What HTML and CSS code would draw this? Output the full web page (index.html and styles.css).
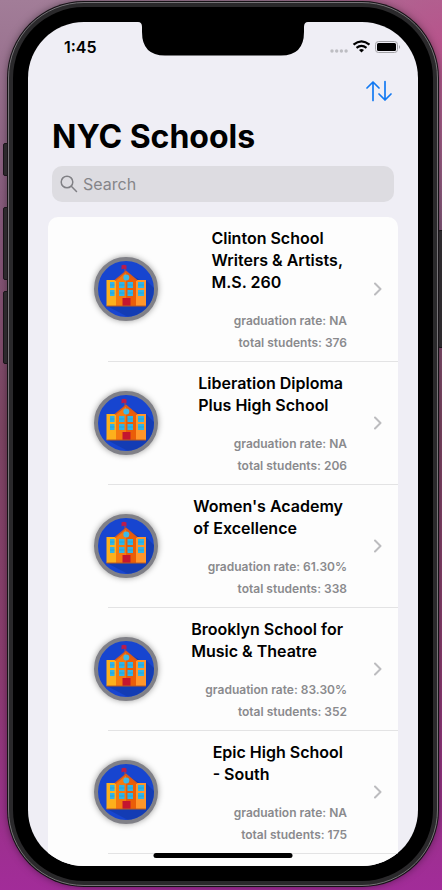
FILE: index.html
```html
<!DOCTYPE html>
<html lang="en">
<head>
<meta charset="utf-8">
<meta name="viewport" content="width=device-width, initial-scale=1">
<title>NYC Schools</title>
<link rel="stylesheet" href="styles.css">
</head>
<body>
<svg class="defs" aria-hidden="true">
  <symbol id="school" viewBox="0 0 56 56">
    <path d="M28 11 44 20 48 19 56 27V40L44 56H30L9 45z" fill="#1239a8" opacity=".7"/>
    <path d="M27 5v7" stroke="#b44a3a" stroke-width="1"/>
    <path d="M23.500 4.500q2.500-1.500 5 0v4q-2.500-1.500-5 0z" fill="#b91d4c"/>
    <path d="M8.500 19H19v26H8.500z" fill="#fdb01c"/>
    <path d="M37 19h11v26H37z" fill="#ff962b"/>
    <path d="M18 19 28 10.500 38 19v26H18z" fill="#f47a10"/>
    <path d="M28 10.500 38 19v26H28z" fill="#ea5d08"/>
    <path d="M17 19.500 28 10.500 39 19.500" fill="none" stroke="#d9581c" stroke-width="1.500"/>
    <circle cx="28.300" cy="16.500" r="3" fill="#3db9e8"/>
    <path d="M12 21h4.500v6H12zM12 29h4.500v6H12zM21 21h5.500v6H21zM21 29h5.500v6H21zM29.500 21h5.500v6h-5.500zM29.500 29h5.500v6h-5.500zM40 21h6v6h-6zM40 29h6v6h-6z" fill="#2fb4e8"/>
    <path d="M12 24h4.500M12 32h4.500M21 24h5.500M29.500 24H35M21 32h5.500M29.500 32H35M40 24h6M40 32h6" stroke="#1f9bd0" stroke-width=".6"/>
    <path d="M24.500 37h8v8h-8z" fill="#c4162f"/>
    <path d="M8.500 45H48" stroke="#bd5a1c" stroke-width="1"/>
  </symbol>
  <symbol id="chevron" viewBox="0 0 8 14"><path d="M1 1.500 6.500 7 1 12.500" fill="none" stroke="#bcbcbf" stroke-width="2" stroke-linecap="round" stroke-linejoin="round"/></symbol>
</svg>
<div class="phone">
  <span class="key key-mute"></span>
  <span class="key key-up"></span>
  <span class="key key-down"></span>
  <span class="key key-power"></span>
  <div class="bezel">
    <div class="screen">
      <svg class="notch" viewBox="0 0 170 34" aria-hidden="true"><path d="M0 0H170Q166 0 166 5V10Q166 33.500 143 33.500H27Q4 33.500 4 10V5Q4 0 0 0z"/></svg>
      <div class="status">
        <time class="clock">1:45</time>
        <svg class="signals" viewBox="0 0 72 14" aria-hidden="true">
          <g fill="#bdbdc2"><circle cx="4" cy="11" r="1.700"/><circle cx="8.700" cy="11" r="1.700"/><circle cx="13.400" cy="11" r="1.700"/><circle cx="18.100" cy="11" r="1.700"/></g>
          <g fill="none" stroke="#000" stroke-width="2.200"><path d="M25.500 4.700q8-6.600 16 0M28.500 7.900q5-4 10 0"/></g>
          <path d="M33.500 12.500 31 10q2.500-2 5 0z"/>
          <rect x="47.500" y="1.500" width="22" height="11" rx="3" fill="none" stroke="#a2a2a6"/>
          <rect x="49" y="3" width="19" height="8" rx="1.500"/>
          <path d="M71 5q2 2 0 4z" fill="#a2a2a6"/>
        </svg>
      </div>
      <header class="header">
        <button class="sort" type="button" aria-label="Sort">
          <svg viewBox="0 0 26 22" aria-hidden="true"><path d="M7 20.500V2M1 8 7 2l6 6M19 1.500V20M13 14l6 6 6-6" fill="none" stroke="#1279f2" stroke-width="1.700" stroke-linecap="round" stroke-linejoin="round"/></svg>
        </button>
        <h1 class="title">NYC Schools</h1>
        <label class="search" aria-label="Search">
          <svg viewBox="0 0 18 18" aria-hidden="true"><circle cx="7" cy="7" r="5.800"/><path d="M11.300 11.300 16.500 16.500"/></svg>
          <input type="search" placeholder="Search">
        </label>
      </header>
      <ul class="list">
        <li class="row"><a href="#clinton">
          <svg class="badge" aria-hidden="true"><use href="#school"/></svg>
          <div class="info"><h2>Clinton School<br>Writers &amp; Artists,<br>M.S. 260</h2><p>graduation rate: NA</p><p>total students: 376</p></div>
          <svg class="chevron" aria-hidden="true"><use href="#chevron"/></svg>
        </a></li>
        <li class="row"><a href="#liberation">
          <svg class="badge" aria-hidden="true"><use href="#school"/></svg>
          <div class="info"><h2>Liberation Diploma<br>Plus High School</h2><p>graduation rate: NA</p><p>total students: 206</p></div>
          <svg class="chevron" aria-hidden="true"><use href="#chevron"/></svg>
        </a></li>
        <li class="row"><a href="#womens">
          <svg class="badge" aria-hidden="true"><use href="#school"/></svg>
          <div class="info"><h2>Women's Academy<br>of Excellence</h2><p>graduation rate: 61.30%</p><p>total students: 338</p></div>
          <svg class="chevron" aria-hidden="true"><use href="#chevron"/></svg>
        </a></li>
        <li class="row"><a href="#brooklyn">
          <svg class="badge" aria-hidden="true"><use href="#school"/></svg>
          <div class="info"><h2>Brooklyn School for<br>Music &amp; Theatre</h2><p>graduation rate: 83.30%</p><p>total students: 352</p></div>
          <svg class="chevron" aria-hidden="true"><use href="#chevron"/></svg>
        </a></li>
        <li class="row"><a href="#epic">
          <svg class="badge" aria-hidden="true"><use href="#school"/></svg>
          <div class="info"><h2>Epic High School<br>- South</h2><p>graduation rate: NA</p><p>total students: 175</p></div>
          <svg class="chevron" aria-hidden="true"><use href="#chevron"/></svg>
        </a></li>
      </ul>
      <span class="home"></span>
    </div>
  </div>
</div>
</body>
</html>
```
FILE: styles.css
```css
* { box-sizing: border-box; }
body {
  margin: 0;
  height: 100vh;
  display: flex;
  padding: 2px 4px 4px 8px;
  overflow: hidden;
  font-family: Inter, "Liberation Sans", sans-serif;
  color: #000;
  background:
    radial-gradient(circle at 100% 5%, #b8548c, transparent 180px),
    linear-gradient(#a27d98 0, #85587a 25%, #7d4563 48%, #8c3c70 75%, #a22c99 100%);
}
h1, h2, p, ul { margin: 0; padding: 0; }
.defs { position: absolute; width: 0; height: 0; }
.phone {
  position: relative;
  flex: 1;
  display: flex;
  padding: 4px;
  border: 1px solid #777478;
  border-radius: 76px;
  background: #2a292b;
  box-shadow: 0 0 0 1px #161216, 0 0 8px rgba(0, 0, 0, .5);
}
.key {
  position: absolute;
  left: -6px;
  width: 5px;
  background: #2d292d;
  border: 1px solid #181418;
  border-radius: 2px 0 0 2px;
}
.key-mute { top: 140px; height: 33px; }
.key-up { top: 204px; height: 73px; }
.key-down { top: 288px; height: 73px; }
.key-power { top: 227px; height: 118px; left: auto; right: -6px; }
.bezel {
  flex: 1;
  display: flex;
  padding: 15px;
  background: #000;
  border-radius: 71px;
}
.screen {
  position: relative;
  flex: 1;
  min-width: 0;
  overflow: hidden;
  background: #efeef5;
  border-radius: 56px;
}
.notch {
  position: absolute;
  top: 0;
  left: calc(50% - 85px);
  width: 170px;
  height: 34px;
}
.status {
  display: flex;
  justify-content: space-between;
  align-items: center;
  height: 50px;
  padding: 0 18px 0 36px;
}
.clock { font-size: 16px; font-weight: 600; }
.signals { width: 72px; height: 14px; }
.header { padding: 8px 24px 0; }
.sort {
  display: block;
  width: 26px;
  height: 22px;
  margin: 0 2px 0 auto;
  padding: 0;
  border: 0;
  background: none;
}
.sort svg { display: block; }
.title { margin-top: 14px; font-size: 32px; line-height: 42px; font-weight: 700; }
.search {
  display: flex;
  align-items: center;
  gap: 5px;
  height: 36px;
  margin-top: 8px;
  padding: 0 8px;
  border-radius: 10px;
  background: #dddce1;
}
.search svg { width: 18px; height: 18px; fill: none; stroke: #808085; stroke-width: 1.5; stroke-linecap: round; }
.search input {
  flex: 1;
  min-width: 0;
  padding: 0;
  border: 0;
  outline: 0;
  background: none;
  font: 400 16px/22px Inter, "Liberation Sans", sans-serif;
}
.search input::placeholder { color: #858589; opacity: 1; }
.list {
  margin: 15px 20px 0;
  padding-bottom: 40px;
  list-style: none;
  background: #fdfdfd;
  border-radius: 10px;
}
.row {
  background: linear-gradient(#e3e3e4, #e3e3e4) 60px 100% / 100% 1px no-repeat;
  padding-bottom: 1px;
}
.row a {
  display: flex;
  align-items: center;
  padding: 0 16px 0 46px;
  color: inherit;
  text-decoration: none;
}
.badge {
  flex: none;
  width: 64px;
  height: 64px;
  border: 4px solid #808087;
  border-radius: 50%;
  background: #1745d0;
  box-shadow: 0 0 6px rgba(0, 0, 0, .4);
}
.info {
  flex: 1;
  display: flex;
  flex-direction: column;
  align-items: flex-end;
  padding: 10px 27px 7px 0;
}
.info h2 {
  margin: 0 4px 17px 0;
  font-size: 16px;
  line-height: 22px;
  font-weight: 600;
  white-space: nowrap;
}
.info p { font-size: 12px; line-height: 22px; font-weight: 600; color: #8a8a8d; }
.chevron { flex: none; width: 8px; height: 14px; }
.home {
  position: absolute;
  left: 50%;
  bottom: 8px;
  width: 139px;
  height: 5px;
  border-radius: 3px;
  background: #000;
  transform: translateX(-50%);
}
```
